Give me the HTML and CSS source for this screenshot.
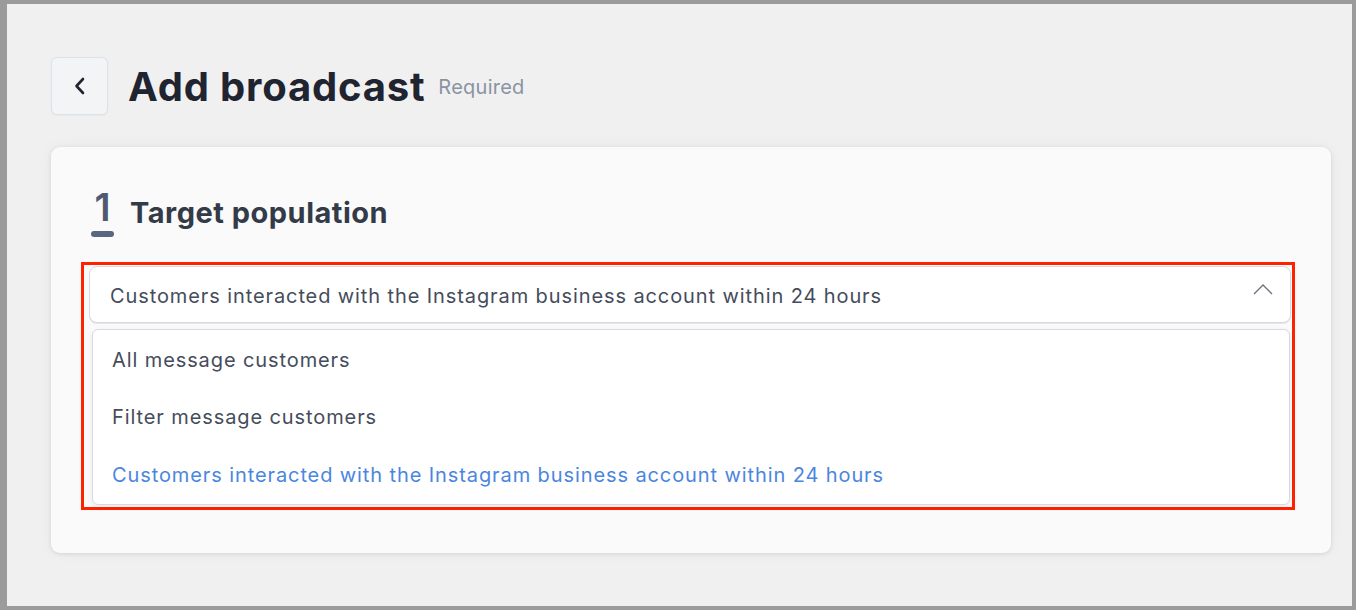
FILE: index.html
```html
<!DOCTYPE html>
<html>
<head>
<meta charset="utf-8">
<link rel="stylesheet" href="styles.css">
</head>
<body>
<div class="frame">
  <div class="page">
    <header class="head">
      <button class="back" aria-label="Back">
        <svg width="14" height="18" viewBox="0 0 14 18"><path d="M10 2 L3.5 9 L10 16" fill="none" stroke="#1f2430" stroke-width="2.6" stroke-linecap="round" stroke-linejoin="round"/></svg>
      </button>
      <h1 class="title">Add broadcast</h1>
      <span class="req">Required</span>
    </header>
    <section class="card">
      <div class="step">
        <span class="num">1</span>
        <h2 class="step-title">Target population</h2>
      </div>
      <div class="highlight">
        <div class="select">
          <span class="select-text">Customers interacted with the Instagram business account within 24 hours</span>
          <svg class="chev" width="22" height="12" viewBox="0 0 22 12"><path d="M2 11 L11 2 L20 11" fill="none" stroke="#6b7280" stroke-width="1.4"/></svg>
        </div>
        <div class="under">
          <span class="ghost g1"></span>
          <span class="ghost g2"></span>
          <span class="ghost g3"></span>
        </div>
        <ul class="menu">
          <li class="opt">All message customers</li>
          <li class="opt">Filter message customers</li>
          <li class="opt active">Customers interacted with the Instagram business account within 24 hours</li>
        </ul>
      </div>
    </section>
  </div>
</div>
</body>
</html>
```
FILE: styles.css
```css
* { box-sizing: border-box; }
html, body { margin: 0; padding: 0; }
body {
  font-family: Inter, "Noto Sans", "Liberation Sans", sans-serif;
  width: 1356px;
  height: 610px;
  overflow: hidden;
}
.frame {
  width: 1356px;
  height: 610px;
  border-style: solid;
  border-color: #9b9b9b;
  border-width: 4px 4px 4px 7px;
  background: #f0f0f0;
}
.page {
  padding: 53px 21px 0 44px;
}
.head {
  display: flex;
  align-items: center;
  height: 58px;
}
.back {
  width: 57px;
  height: 58px;
  border: 1px solid #dce2ea;
  border-radius: 6px;
  background: #f3f4f5;
  display: flex;
  align-items: center;
  justify-content: center;
  padding: 0;
  margin: 0 20px 0 0;
  box-shadow: 0 1px 2px rgba(0,0,0,0.04);
}
.title {
  margin: 0;
  font-size: 40px;
  font-weight: 700;
  color: #1f2430;
  letter-spacing: 0.8px;
  line-height: 1;
  padding-top: 2px;
}
.req {
  margin-left: 13px;
  font-size: 20px;
  color: #8a93a3;
  letter-spacing: 0.25px;
  padding-top: 2px;
}
.card {
  margin-top: 32px;
  height: 406px;
  background: #fafafa;
  border-radius: 9px;
  box-shadow: 0 1px 4px rgba(0,0,0,0.10), 0 0 16px rgba(0,0,0,0.04);
  padding: 42px 36px 0 30px;
}
.step {
  display: flex;
  align-items: flex-start;
  height: 73px;
}
.num {
  width: 23px;
  margin-left: 10px;
  font-size: 38px;
  font-weight: 600;
  color: #4f5a72;
  line-height: 36px;
  text-align: center;
  position: relative;
  height: 48px;
}
.num::after {
  content: "";
  position: absolute;
  left: 0;
  top: 42px;
  width: 23px;
  height: 6px;
  border-radius: 3px;
  background: #5a6580;
}
.step-title {
  margin: 0 0 0 16px;
  font-size: 29px;
  font-weight: 700;
  color: #333a48;
  letter-spacing: 0.5px;
  line-height: 48px;
}
.highlight {
  position: relative;
  border: 3px solid #ff2200;
  height: 248px;
  padding: 1px 1px 0 5px;
}
.select {
  height: 57px;
  background: #fff;
  border: 1px solid #d9d9e2;
  border-radius: 8px;
  display: flex;
  align-items: center;
  padding: 3px 16px 0 20px;
  box-shadow: 0 1px 0 #e5e5ea;
}
.select-text {
  flex: 1;
  font-size: 20px;
  letter-spacing: 0.9px;
  color: #454c5c;
}
.chev { margin-top: -14px; }
.under {
  position: relative;
  height: 180px;
}
.ghost {
  position: absolute;
  left: 3px;
  width: 2px;
  background: #c8c8cc;
}
.g1 { top: 55px; height: 16px; }
.g2 { top: 122px; height: 3px; background: #555; }
.g3 { top: 150px; height: 8px; }
.menu {
  position: absolute;
  left: 8px;
  top: 64px;
  right: 2px;
  height: 176px;
  margin: 0;
  padding: 0;
  list-style: none;
  background: #fff;
  border: 1px solid #d6d8e6;
  border-radius: 6px;
  box-shadow: 0 2px 6px rgba(0,0,0,0.06);
  display: flex;
  flex-direction: column;
  justify-content: center;
}
.opt {
  height: 57.5px;
  display: flex;
  align-items: center;
  padding-left: 19px;
  font-size: 20px;
  letter-spacing: 0.9px;
  color: #454c5c;
}
.opt.active { color: #4a86e0; }
```
